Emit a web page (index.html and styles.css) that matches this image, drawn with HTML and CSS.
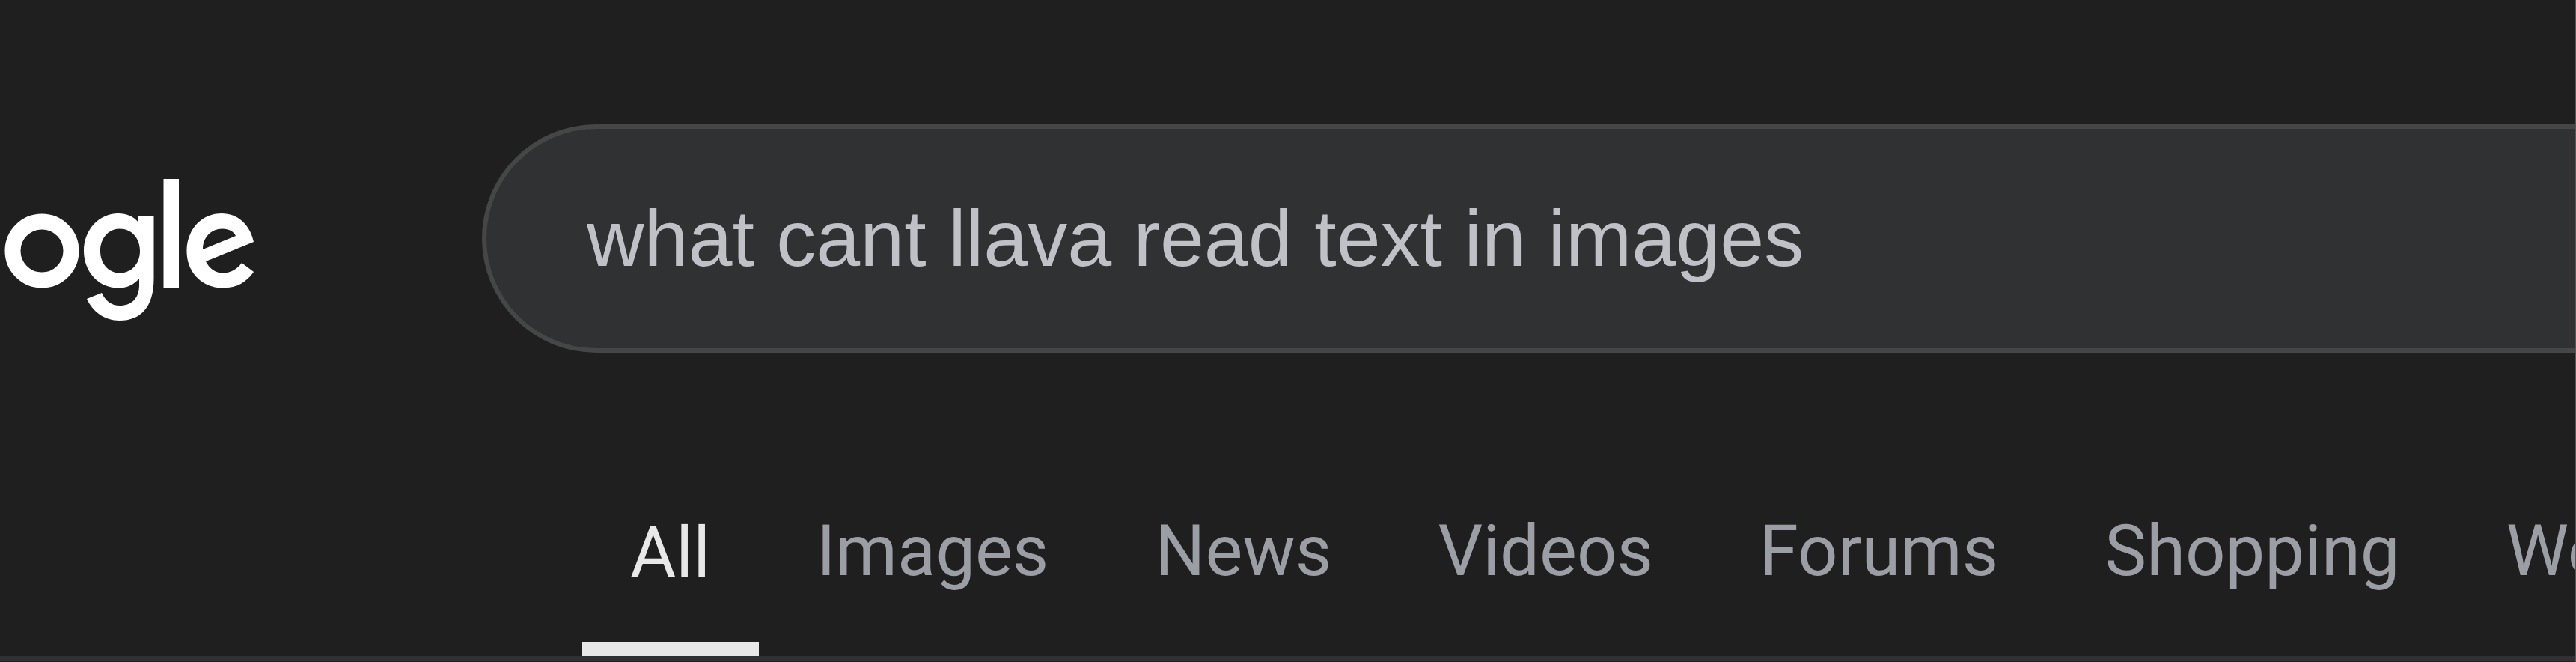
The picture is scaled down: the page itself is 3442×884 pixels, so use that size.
FILE: index.html
```
<!DOCTYPE html>
<html lang="en">
<head>
<meta charset="utf-8">
<title>Search</title>
<link rel="stylesheet" href="styles.css">
</head>
<body>
<div class="page">
  <header class="header">
    <a class="logo" href="#" aria-label="Google home">
      <svg class="logo-mark" viewBox="0 0 344 192" aria-hidden="true">
        <circle class="ring" cx="-50" cy="97" r="39"/>
        <circle class="ring" cx="56" cy="97" r="39"/>
        <path class="solid" fill-rule="evenodd" d="M185 50H205.500V134C205.500 172 188 190 160 190C139 190 124 178 116 161L136 153C141 164 149 170 160 170C176 170 186 160 186 143V134C179 142 170 146.500 158 146.500C132 146.500 112 125 112 97C112 69 132 47 158 47C169 47 179 51 185 59ZM160 67.500C145 67.500 134 80 134 97C134 114 145 126.500 160 126.500C176 126.500 187 114 187 97C187 80 176 67.500 160 67.500Z"/>
        <path class="solid" d="M218.500 1H239V146.500H218.500Z"/>
        <path class="solid" fill-rule="evenodd" d="M339 85L275 111C280 121 288 126.500 298 126.500C309 126.500 317 121 323 113L339 125C330 138 317 146.500 298 146.500C270 146.500 249.500 126 249.500 97C249.500 68 270 47 296 47C318 47 332 62 337 78ZM271 95L315 77C312 71 306 67.500 297 67.500C282 67.500 271 79 271 95Z"/>
      </svg>
    </a>
    <form class="search" role="search">
      <input class="search-input" type="text" aria-label="Search" value="what cant llava read text in images">
    </form>
  </header>
  <nav class="tabs" aria-label="Result types">
    <a class="tab tab-active" href="#" aria-current="page">All</a>
    <a class="tab" href="#">Images</a>
    <a class="tab" href="#">News</a>
    <a class="tab" href="#">Videos</a>
    <a class="tab" href="#">Forums</a>
    <a class="tab" href="#">Shopping</a>
    <a class="tab" href="#">Web</a>
  </nav>
</div>
</body>
</html>
```
FILE: styles.css
```
* {
  box-sizing: border-box;
}

body {
  margin: 0;
  background: #1f1f1f;
}

.page {
  overflow: hidden;
  border-right: 2px solid #565656;
  padding-bottom: 1px;
}

.header {
  display: flex;
  padding-top: 166px;
}

.logo {
  flex: none;
  width: 644px;
  padding-top: 72px;
}

.logo-mark {
  display: block;
  width: 344px;
  height: 192px;
}

.ring {
  fill: none;
  stroke: #fff;
  stroke-width: 21px;
}

.solid {
  fill: #fff;
}

.search {
  flex: 1;
  display: flex;
  height: 305px;
  border: 6px solid #454746;
  border-right: 0;
  border-radius: 153px 0 0 153px;
  background: #303133;
}

.search-input {
  flex: 1;
  min-width: 0;
  border: 0;
  padding: 0 0 0 134px;
  background: transparent;
  color: #bfc1c7;
  font: 106px "Liberation Sans", Arial, sans-serif;
  outline: none;
}

.tabs {
  display: flex;
  gap: 12px;
  margin-top: 206px;
  padding-left: 777px;
  border-bottom: 7px solid #303133;
}

.tab {
  flex: none;
  height: 199px;
  padding: 0 65px;
  color: #9b9ea5;
  font: 94px/118px Roboto, sans-serif;
  text-decoration: none;
}

.tab-active {
  padding-top: 3px;
  border-bottom: 19px solid #e8e8e8;
  color: #e8e8e8;
}
```
